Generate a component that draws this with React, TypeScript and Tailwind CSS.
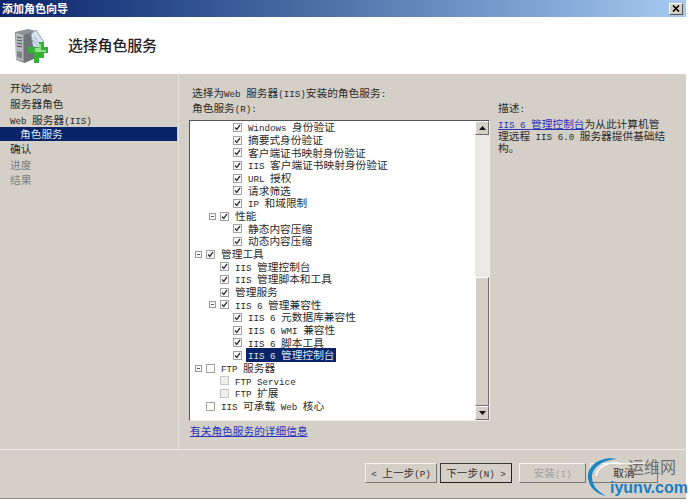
import React from 'react';

// latin runs and cjk runs have different sizes in the original bitmap font
const Txt: React.FC<{ text: string }> = ({ text }) => (
  <span className="whitespace-pre text-[10.7px] leading-[14px]">
    {text.split(/([\x00-\x7f]+)/).map((part, i) =>
      part === '' ? null : /[\x00-\x7f]/.test(part) ? (
        <span key={i} className="font-['Liberation_Mono','Noto_Sans_CJK_SC',monospace] text-[9.2px] leading-none">{part}</span>
      ) : (
        <span key={i} className="text-[10.7px] leading-none">{part}</span>
      )
    )}
  </span>
);

type Row = { text: string; level: number; expander?: boolean; checked?: boolean; dim?: boolean; selected?: boolean };

const rows: Row[] = [
  { text: 'Windows 身份验证', level: 2, checked: true },
  { text: '摘要式身份验证', level: 2, checked: true },
  { text: '客户端证书映射身份验证', level: 2, checked: true },
  { text: 'IIS 客户端证书映射身份验证', level: 2, checked: true },
  { text: 'URL 授权', level: 2, checked: true },
  { text: '请求筛选', level: 2, checked: true },
  { text: 'IP 和域限制', level: 2, checked: true },
  { text: '性能', level: 1, expander: true, checked: true },
  { text: '静态内容压缩', level: 2, checked: true },
  { text: '动态内容压缩', level: 2, checked: true },
  { text: '管理工具', level: 0, expander: true, checked: true },
  { text: 'IIS 管理控制台', level: 1, checked: true },
  { text: 'IIS 管理脚本和工具', level: 1, checked: true },
  { text: '管理服务', level: 1, checked: true },
  { text: 'IIS 6 管理兼容性', level: 1, expander: true, checked: true },
  { text: 'IIS 6 元数据库兼容性', level: 2, checked: true },
  { text: 'IIS 6 WMI 兼容性', level: 2, checked: true },
  { text: 'IIS 6 脚本工具', level: 2, checked: true },
  { text: 'IIS 6 管理控制台', level: 2, checked: true, selected: true },
  { text: 'FTP 服务器', level: 0, expander: true },
  { text: 'FTP Service', level: 1, dim: true },
  { text: 'FTP 扩展', level: 1, dim: true },
  { text: 'IIS 可承载 Web 核心', level: 0 },
];

const Expander = () => (
  <span className="w-[7px] h-[7px] border border-[#9a9a9a] bg-white flex items-center justify-center shrink-0">
    <span className="w-[3px] h-px bg-[#555]" />
  </span>
);

const Check: React.FC<{ checked?: boolean; dim?: boolean }> = ({ checked, dim }) => (
  <span className={`w-[9px] h-[9px] border shrink-0 flex items-center justify-center ${dim ? 'border-[#c4c4c4] bg-[#efefef]' : 'border-[#a2a2a2] bg-white'}`}>
    {checked && (
      <svg width="7" height="7" viewBox="0 0 7 7" fill="none">
        <path d="M1 3.5 L2.8 5.5 L6 1" stroke="#333" strokeWidth="1.3" />
      </svg>
    )}
  </span>
);

const TreeRow: React.FC<{ row: Row }> = ({ row }) => {
  const expanderLeft = row.level === 0 ? 'w-[16px]' : row.level === 1 ? 'w-[30px]' : 'w-[43px]';
  return (
    <div className="h-[12.68px] flex items-center shrink-0">
      <div className={`${expanderLeft} shrink-0 flex justify-end pr-[4px]`}>{row.expander && <Expander />}</div>
      <Check checked={row.checked} dim={row.dim} />
      <span className={`ml-[4px] pl-[2px] pr-[1px] h-[14px] flex items-center whitespace-nowrap ${row.selected ? 'bg-[#0a246a] text-[#dfe6f2]' : 'text-[#2a2a2a]'}`}>
        <Txt text={row.text} />
      </span>
    </div>
  );
};

const ScrollArrow: React.FC<{ up?: boolean }> = ({ up }) => (
  <div className="h-[14px] bg-[#d4d0c8] border border-t-white border-l-white border-r-[#6e6e6e] border-b-[#6e6e6e] flex items-center justify-center shrink-0">
    <svg width="7" height="4" viewBox="0 0 7 4">
      <path d={up ? 'M3.5 0 L7 4 L0 4 Z' : 'M0 0 L7 0 L3.5 4 Z'} fill="#111" />
    </svg>
  </div>
);

const WizButton: React.FC<{ label: string; width: string; isDefault?: boolean; disabled?: boolean }> = ({ label, width, isDefault, disabled }) => (
  <div
    className={`${width} h-[20px] flex items-center justify-center border ${
      isDefault
        ? 'border-[#3a3a3a] border-b-[#222] border-r-[#222]'
        : 'border-t-[#f4f2ee] border-l-[#f4f2ee] border-r-[#777] border-b-[#777]'
    } ${disabled ? 'text-[#a0a0a0]' : 'text-[#333]'}`}
  >
    <Txt text={label} />
  </div>
);

const ServerIcon = () => (
  <svg width="34" height="36" viewBox="0 0 34 36">
    <path d="M1 4 L14 1 L22 3 L22 30 L10 35 L2 32 Z" fill="#8d9298" />
    <path d="M10 7 L22 3 L22 30 L10 35 Z" fill="#6e747a" />
    <path d="M2 5 L9 7 L9 33 L2 31 Z" fill="#b9bec2" />
    <path d="M3 9 L8 10 M3 12 L8 13 M3 15 L8 16 M3 18 L8 19" stroke="#4c5156" strokeWidth="1.2" />
    <path d="M3 23 L8 24 L8 31 L3 29 Z" fill="#7e8388" />
    <path d="M17 6 L22 2 L30 14 L25 21 L19 18 Z" fill="#dbe4f0" stroke="#8ea3bd" />
    <path d="M20 9 L26 16 M19 12 L24 18" stroke="#8ea3bd" />
    <path d="M20 20 H25 V15 H30 V20 H34 V26 H30 V31 H25 V36 H20 V26 H14 V20 Z" fill="#35b135" transform="translate(0 -1)" />
    <path d="M22 20 H26 V16 H28 V22 H33 V24 H22 Z" fill="#8ee08e" transform="translate(-1 0)" />
  </svg>
);

const App: React.FC = () => {
  const navItems = [
    { text: '开始之前', h: 'h-[16px]' },
    { text: '服务器角色', h: 'h-[16px]' },
    { text: 'Web 服务器(IIS)', h: 'h-[15px]' },
    { text: '角色服务', h: 'h-[14px]', active: true },
    { text: '确认', h: 'h-[16px]' },
    { text: '进度', h: 'h-[15px]', grey: true },
    { text: '结果', h: 'h-[16px]', grey: true },
  ];

  return (
    <div className="relative w-[690px] h-[504px] bg-white overflow-hidden font-['Noto_Sans_CJK_SC','Liberation_Sans',sans-serif] text-[#2a2a2a]">
      <div className="w-[686px] h-[499px] flex flex-col border-b border-[#8a8883]">
        {/* Title bar */}
        <div className="h-[17px] shrink-0 flex items-center justify-between pl-[2px] pr-[3px] bg-gradient-to-r from-[#0a246a] to-[#a6caf0]">
          <span className="text-white text-[11px] font-bold leading-none">添加角色向导</span>
          <div className="w-[14px] h-[12px] bg-[#d4d0c8] border border-t-white border-l-white border-r-[#555] border-b-[#555] flex items-center justify-center">
            <svg width="8" height="7" viewBox="0 0 8 7">
              <path d="M1 0.5 L7 6.5 M7 0.5 L1 6.5" stroke="#000" strokeWidth="1.6" />
            </svg>
          </div>
        </div>

        {/* Header */}
        <div className="h-[57px] shrink-0 bg-white flex items-center pl-[14px]">
          <ServerIcon />
          <span className="ml-[20px] text-[15px] font-medium text-[#222] tracking-[-0.2px]">选择角色服务</span>
        </div>

        {/* Body */}
        <div className="flex-1 flex bg-[#d4d0c8] min-h-0">
          <nav className="w-[179px] shrink-0 border-r border-[#e6e3dd] pt-[6px]">
            {navItems.map((item) => (
              <div
                key={item.text}
                className={`${item.h} flex items-center ${
                  item.active ? 'pl-[20px] mr-[1px] bg-[#0a246a] text-[#dfe6f2]' : 'pl-[10px]'
                } ${item.grey ? 'text-[#808080]' : ''}`}
              >
                <Txt text={item.text} />
              </div>
            ))}
          </nav>

          <main className="flex-1 flex min-w-0 pl-[10px]">
            <div className="w-[301px] shrink-0 pt-[11px] flex flex-col">
              <div className="h-[15px] pl-[3px] flex items-center whitespace-nowrap"><Txt text="选择为Web 服务器(IIS)安装的角色服务:" /></div>
              <div className="h-[15px] pl-[3px] flex items-center"><Txt text="角色服务(R):" /></div>
              <div className="mt-[5px] h-[301px] flex border border-t-[#555] border-l-[#555] border-r-[#f0eee9] border-b-[#f0eee9] bg-white">
                <div className="flex-1 flex flex-col overflow-hidden min-w-0">
                  {rows.map((row) => (
                    <TreeRow key={row.text} row={row} />
                  ))}
                </div>
                <div className="w-[14px] shrink-0 flex flex-col">
                  <ScrollArrow up />
                  <div className="h-[142px] bg-[#ebe9e5]" />
                  <div className="flex-1 bg-[#d4d0c8] border border-t-white border-l-white border-r-[#6e6e6e] border-b-[#6e6e6e]" />
                  <ScrollArrow />
                </div>
              </div>
              <div className="mt-[2px] h-[15px] pl-[1px] flex items-center text-[#2a35b8] whitespace-nowrap"><span className="underline text-[10.7px] leading-[14px]"><Txt text="有关角色服务的详细信息" /></span></div>
            </div>

            <div className="pl-[8px] pt-[26px] w-[170px] shrink-0">
              <div className="h-[15px] flex items-center"><Txt text="描述:" /></div>
              <div className="mt-[2px] text-[10.7px]">
                <div className="h-[12px] leading-[12px] whitespace-nowrap"><span className="text-[#2a35b8] underline"><Txt text="IIS 6 管理控制台" /></span><Txt text="为从此计算机管" /></div>
                <div className="h-[12px] leading-[12px] whitespace-nowrap"><Txt text="理远程 IIS 6.0 服务器提供基础结" /></div>
                <div className="h-[12px] leading-[12px] whitespace-nowrap"><Txt text="构。" /></div>
              </div>
            </div>
          </main>
        </div>

        {/* Footer */}
        <div className="h-[49px] shrink-0 bg-[#d4d0c8] border-t border-[#eeece7] flex items-start justify-end pt-[13px] pr-[28px]">
          <WizButton label="< 上一步(P)" width="w-[72px]" />
          <div className="w-[3px]" />
          <WizButton label="下一步(N) >" width="w-[72px]" isDefault />
          <div className="w-[7px]" />
          <WizButton label="安装(I)" width="w-[67px]" disabled />
          <div className="w-[4px]" />
          <WizButton label="取消" width="w-[68px]" />
        </div>
      </div>

      {/* Watermark */}
      <svg className="absolute left-[585px] top-[456px]" width="50" height="44" viewBox="0 0 50 44" fill="none">
        <path d="M32 3 C18 0 2 8 3 22 C4 32 12 38 21 40 C12 35 7 29 7 21 C7 11 18 4 32 3 Z" fill="#1b86c4" />
        <path d="M36 8 C26 4 12 10 11 20" stroke="#ffffff" strokeWidth="1.5" />
      </svg>
      <span className="absolute left-[628px] top-[456px] text-[16px] leading-[20px] text-[#6f6f6f]">运维网</span>
      <span className="absolute left-[610px] top-[478px] text-[16px] leading-[19px] font-bold text-[#1b7fc0] font-['Liberation_Sans',sans-serif]">iyunv.com</span>
    </div>
  );
};

export default App;
